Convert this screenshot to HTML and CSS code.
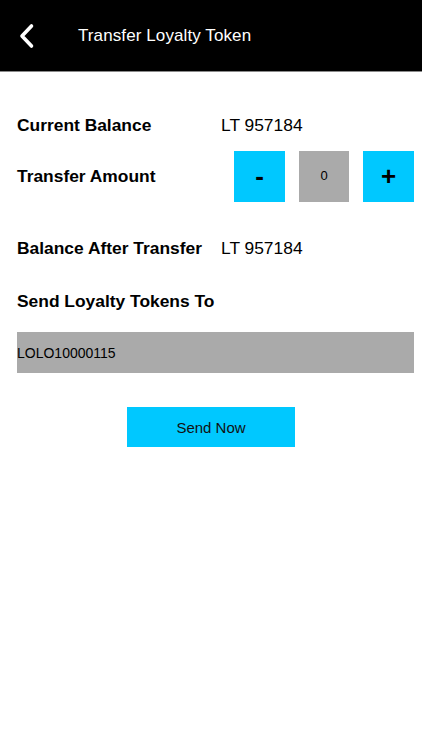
FILE: index.html
```html
<!DOCTYPE html>
<html>
<head>
<meta charset="utf-8">
<link rel="stylesheet" href="styles.css">
</head>
<body>
<header class="topbar">
  <svg class="back" width="20" height="26" viewBox="0 0 20 26">
    <path d="M13.5 3 L4 13 L13.5 23" fill="none" stroke="#fff" stroke-width="3.6" stroke-linecap="round" stroke-linejoin="round"/>
  </svg>
  <h1 class="title">Transfer Loyalty Token</h1>
</header>
<main class="content">
  <div class="row row-balance">
    <span class="label">Current Balance</span>
    <span class="value">LT 957184</span>
  </div>
  <div class="row row-amount">
    <span class="label">Transfer Amount</span>
    <div class="stepper">
      <button class="step-btn">-</button>
      <div class="step-value">0</div>
      <button class="step-btn">+</button>
    </div>
  </div>
  <div class="row row-after">
    <span class="label">Balance After Transfer</span>
    <span class="value">LT 957184</span>
  </div>
  <div class="section-title">Send Loyalty Tokens To</div>
  <div class="recipient">LOLO10000115</div>
  <div class="actions">
    <button class="send">Send Now</button>
  </div>
</main>
</body>
</html>
```
FILE: styles.css
```css
* { box-sizing: border-box; }
html, body { margin: 0; padding: 0; background: #fff; }
body { font-family: "Liberation Sans", Arial, sans-serif; color: #000; width: 422px; height: 750px; }

.topbar {
  height: 72px;
  background: #000;
  border-bottom: 1px solid #8a8a8a;
  display: flex;
  align-items: center;
  padding-left: 18px;
}
.back { display: block; margin-top: 0; }
.title {
  margin: 0 0 0 40px;
  font-size: 17px;
  font-weight: normal;
  color: #fff;
  letter-spacing: 0.1px;
}

.content { padding: 33px 8px 0 17px; }

.row { display: flex; align-items: center; }
.label { font-weight: bold; font-size: 17.4px; width: 204px; flex: none; }
.value { font-size: 17.4px; }

.row-balance { height: 40px; }
.row-amount { height: 51px; margin-top: 6px; }
.row-after { height: 40px; margin-top: 26px; }

.stepper { margin-left: auto; display: flex; gap: 14px; }
.step-btn {
  width: 51px; height: 51px;
  border: none; padding: 0;
  background: #00c8ff;
  font-family: "Liberation Sans", Arial, sans-serif;
  font-weight: bold; font-size: 26px; color: #000;
  display: flex; align-items: center; justify-content: center;
}
.step-value {
  width: 50px; height: 51px;
  background: #aaaaaa;
  font-size: 13px;
  display: flex; align-items: center; justify-content: center;
  padding-bottom: 2px;
}

.section-title {
  font-weight: bold; font-size: 17.4px;
  height: 30px; margin-top: 18px;
  display: flex; align-items: center;
}
.recipient {
  margin-top: 16px;
  height: 41px;
  background: #aaaaaa;
  font-size: 14px;
  display: flex; align-items: center;
}
.actions { display: flex; justify-content: center; margin-top: 34px; padding-right: 9px; }
.send {
  width: 168px; height: 40px;
  border: none;
  background: #00c8ff;
  font-family: "Liberation Sans", Arial, sans-serif;
  font-size: 15px; color: #111;
}
```
